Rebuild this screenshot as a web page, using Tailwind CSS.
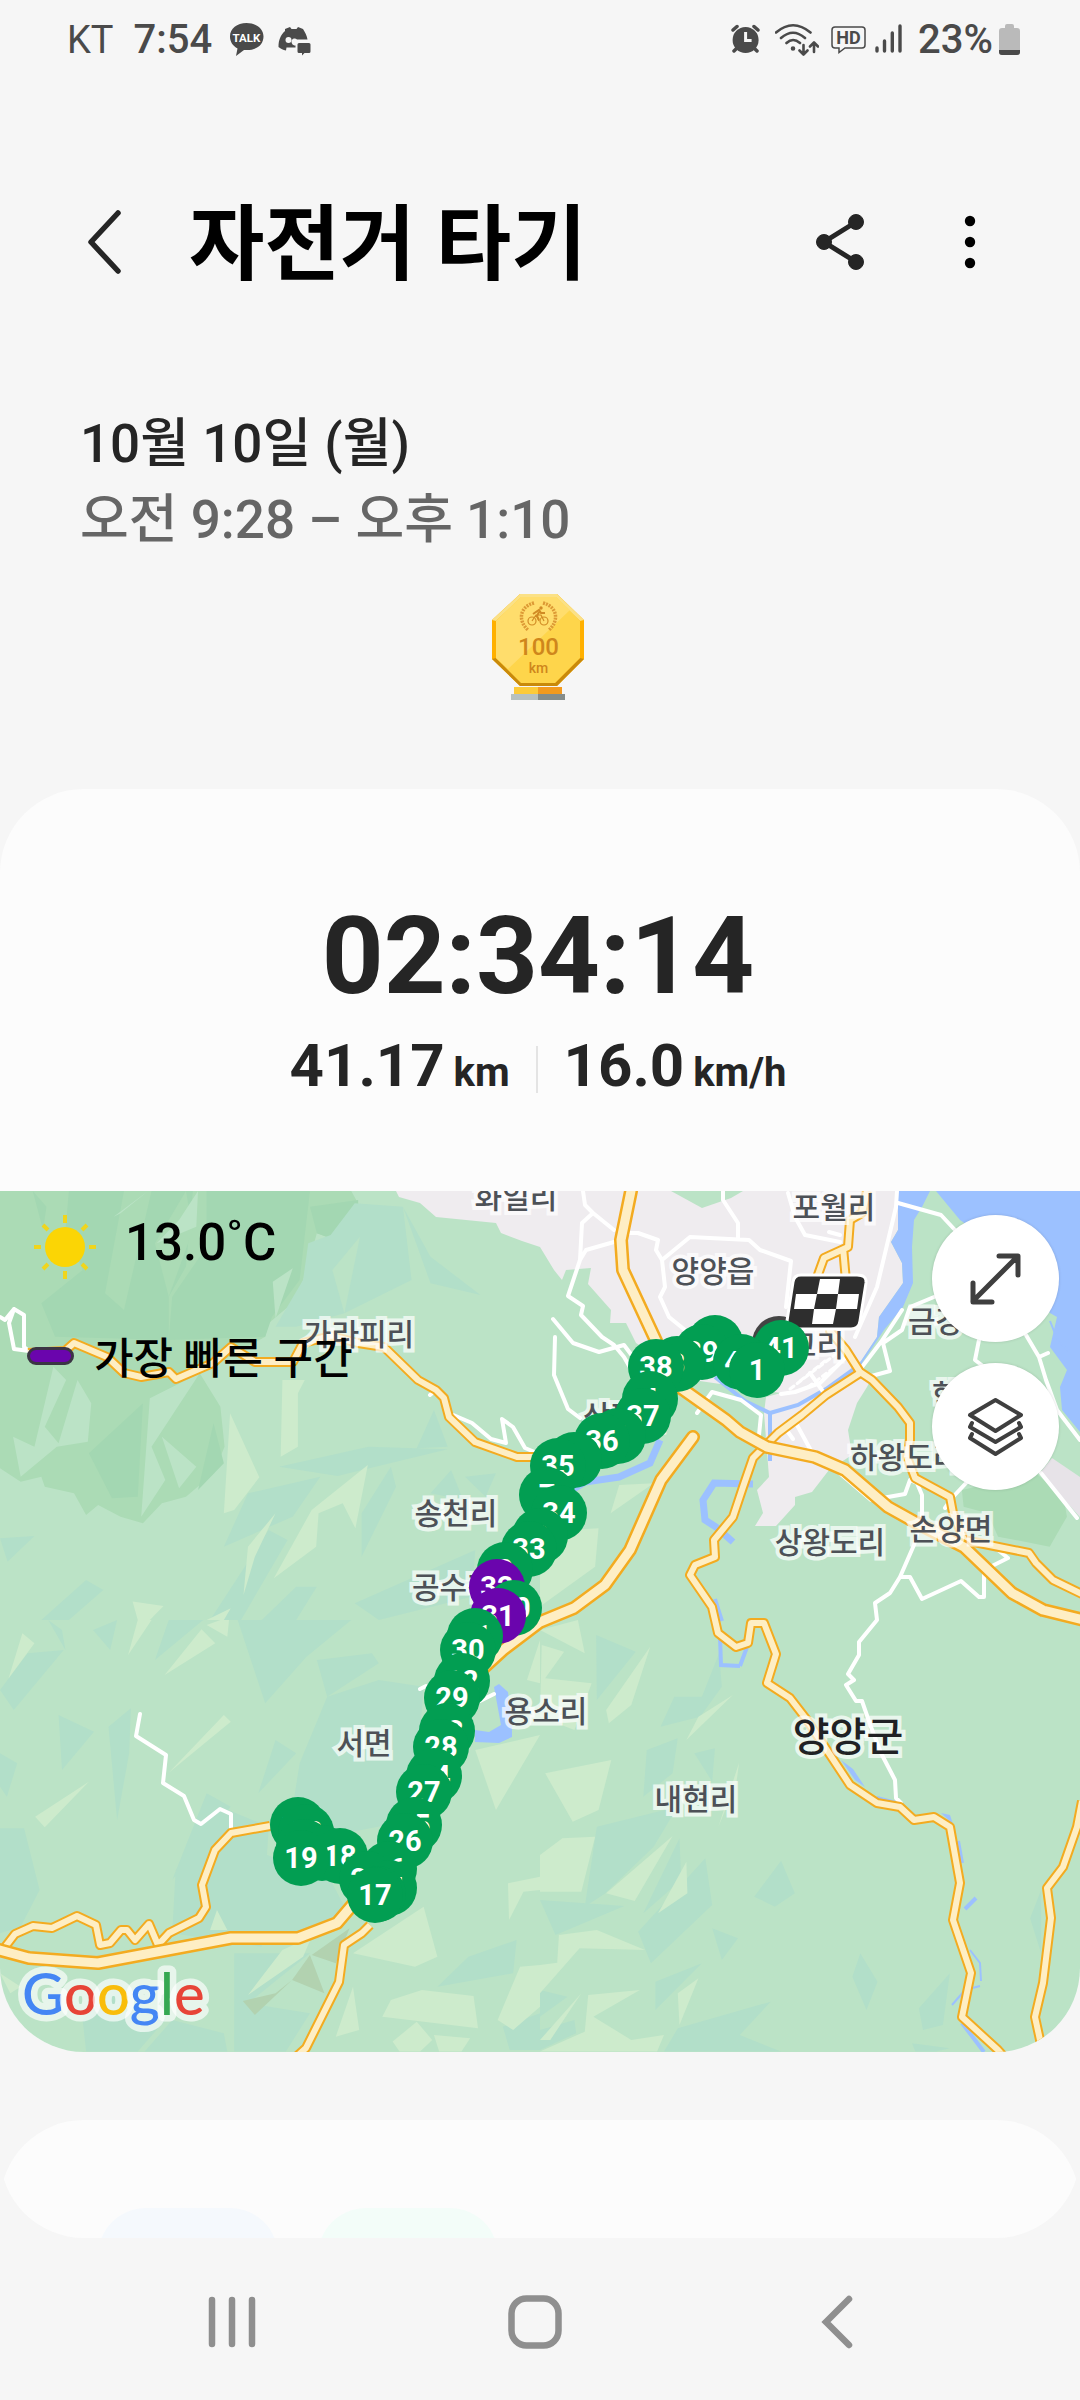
<!DOCTYPE html>
<html lang="ko">
<head>
<meta charset="utf-8">
<meta name="viewport" content="width=device-width, initial-scale=1">
<title>자전거 타기</title>
<script src="https://cdn.jsdelivr.net/npm/@tailwindcss/browser@4"></script>
</head>
<body class="flex min-h-screen flex-col bg-[#f6f6f6] font-['Roboto','Noto_Sans_CJK_KR',sans-serif] text-[#252525]">

<!-- Status bar -->
<div class="flex h-20 items-center pl-[67px] pr-[59px] text-[40px] leading-none text-[#4a4a4a]">
  <span class="text-[38px]">KT</span>
  <span class="ml-5 font-medium">7:54</span>
  <svg class="ml-[17px] h-9 w-[35px]" viewBox="0 0 35 36" aria-label="TALK">
    <path d="M17.5 1C8 1 1 6.500 1 14.500c0 5.500 3 9.500 7.500 12L7 34l8-6c12 1 19.500-5 19.500-13.500C34.500 6.500 27 1 17.500 1z" fill="#4a4a4a"/>
    <text x="17.500" y="19.500" font-family="Roboto" font-weight="700" font-size="11.500" text-anchor="middle" fill="#fff">TALK</text>
  </svg>
  <svg class="ml-3.5 h-8 w-[34px]" viewBox="279 25 34 32" aria-hidden="true">
    <path d="M286 30l5-2 1.500 2h5l1.500-2 5 2c2 3 4 7 4.500 10.500H298c-2-2.500-7-.5-5 4 .5 1.500 2 2 3.500 2v2h-9l-.5 3c-3-.5-5-1.500-7.500-3.500 0-7 2-12 6.500-16z" fill="#4a4a4a"/>
    <circle cx="289.500" cy="41" r="3" fill="#f6f6f6"/>
    <path d="M300 44h10a1.500 1.500 0 0 1 1.500 1.500v7a1.500 1.500 0 0 1-1.500 1.500h-4.500l-2.500 2.500V54h-3a1.500 1.500 0 0 1-1.500-1.500v-7A1.500 1.500 0 0 1 300 44z" fill="#4a4a4a"/>
  </svg>
  <svg class="ml-auto h-8 w-[30px]" viewBox="731 25 30 32" aria-hidden="true">
    <circle cx="745.600" cy="41" r="13" fill="#4a4a4a"/>
    <path d="M733 31l4-3.500M758 31l-4-3.500M737 49l-3 3M754 49l3 3" stroke="#4a4a4a" stroke-width="3.500" stroke-linecap="round"/>
    <path d="M745.600 33v8.500h6" stroke="#f6f6f6" stroke-width="3" fill="none"/>
  </svg>
  <svg class="ml-3.5 h-9 w-[44px]" viewBox="775 22 44 36" aria-hidden="true" fill="none" stroke="#4a4a4a" stroke-width="2.600" stroke-linecap="round" stroke-linejoin="round">
    <path d="M776 32.500q17-14.500 34.500 0M781 38q12-10.500 24 0M786.500 43q6.500-6 13.500 0"/>
    <circle cx="793" cy="48.500" r="1" fill="#4a4a4a"/>
    <path d="M803.500 45v9m-4-3.500l4 4 4-4M814 52v-9m-4 3.500l4-4 4 4"/>
  </svg>
  <svg class="ml-3 h-8 w-[35px]" viewBox="831 25 35 32" aria-label="HD">
    <path d="M835 28h27a3 3 0 0 1 3 3v15a3 3 0 0 1-3 3h-17l-6 4.500V49h-4a3 3 0 0 1-3-3V31a3 3 0 0 1 3-3z" fill="none" stroke="#4a4a4a" stroke-width="1.500"/>
    <text x="848.500" y="45" font-family="Roboto" font-weight="700" font-size="18" text-anchor="middle" fill="#4a4a4a">HD</text>
  </svg>
  <svg class="ml-2 h-8 w-7" viewBox="874 25 28 32" aria-hidden="true" stroke="#4a4a4a" stroke-width="3.400" stroke-linecap="round">
    <path d="M877 49v3M884.500 42v10M892.300 34v18M900 27v25"/>
  </svg>
  <span class="ml-4 font-medium">23%</span>
  <svg class="ml-1.5 h-8 w-[22px]" viewBox="0 0 22 32" aria-hidden="true">
    <path d="M6 2a2 2 0 0 1 2-2h5a2 2 0 0 1 2 2v2h3a3 3 0 0 1 3 3v21a3 3 0 0 1-3 3H3a3 3 0 0 1-3-3V7a3 3 0 0 1 3-3h3z" fill="#bababa"/>
    <path d="M0 26h21v2a3 3 0 0 1-3 3H3a3 3 0 0 1-3-3z" fill="#4a4a4a"/>
  </svg>
</div>

<!-- Title bar -->
<header class="mt-[82px] flex h-40 items-center pl-[76px] pr-[80px]">
  <button type="button" aria-label="뒤로" class="flex h-20 w-14 items-center justify-center">
    <svg class="h-[70px] w-10" viewBox="0 0 40 70" fill="none" stroke="#252525" stroke-width="5.500" stroke-linecap="round" stroke-linejoin="round"><path d="M34 6L7 35l27 29"/></svg>
  </button>
  <h1 class="ml-[57px] pt-1.5 text-[82px] leading-[120px] font-bold text-black">자전거 타기</h1>
  <button type="button" aria-label="공유" class="ml-auto flex h-20 w-20 items-center justify-center">
    <svg class="h-[60px] w-[52px]" viewBox="0 0 52 60" fill="#252525" stroke="#252525"><path d="M42 10L10 30l32 20" fill="none" stroke-width="5"/><circle cx="10" cy="30" r="7.500"/><circle cx="42" cy="10" r="7.500"/><circle cx="42" cy="50" r="7.500"/></svg>
  </button>
  <button type="button" aria-label="옵션 더보기" class="ml-[60px] flex h-20 w-[60px] items-center justify-center">
    <svg class="h-[60px] w-4" viewBox="0 0 16 60"><circle cx="8" cy="9" r="5.200"/><circle cx="8" cy="30" r="5.200"/><circle cx="8" cy="51" r="5.200"/></svg>
  </button>
</header>

<main>
  <section class="mt-[84px] px-20 text-[53px] leading-[76px] font-medium">
    <p>10월 10일 (월)</p>
    <p class="text-[#666]">오전 9:28 – 오후 1:10</p>
  </section>

  <div class="mt-9 flex justify-center pr-1">
  <svg class="h-[106px] w-[96px]" viewBox="490 594 96 106" role="img" aria-label="100 km">
    <path d="M520 594h37l27 26v39l-27 27h-37l-28-27v-39z" fill="#ffb000"/>
    <path d="M492 659l28 27h37l27-27-4-1-25 25h-33l-26-25z" fill="#c98a0b"/>
    <path d="M520 594h37l27 26-4 1-25-24h-33l-26 24-4-1z" fill="#fbe186"/>
    <path d="M521 597h35l24 24v37l-25 25h-34l-25-25v-37z" fill="#fed54b"/>
    <path d="M521 597h35l14 13-62 59-12-11v-37z" fill="#ffdd6c"/>
    <g fill="none" stroke="#dd9a35" stroke-width="3.500" stroke-dasharray="2 1"><path d="M534 603c-15 4-16 18-6 27M543 603c15 4 16 18 6 27"/></g>
    <g fill="none" stroke="#d18b24" stroke-width="1.200"><circle cx="532" cy="621" r="4"/><circle cx="544" cy="621" r="4"/><path d="M532 621l4-6 5 0 3 6M536 615l3 6"/><path d="M533 614l6-4 2 3h4M539 612l-2 4 2 4" stroke-width="2"/></g>
    <circle cx="541" cy="608" r="1.700" fill="#d18b24"/>
    <text x="538.500" y="655" text-anchor="middle" font-family="Roboto" font-weight="500" font-size="24" fill="#cf861c">100</text>
    <text x="538.500" y="673" text-anchor="middle" font-family="Roboto" font-weight="500" font-size="14" fill="#cf861c">km</text>
    <path d="M514 687h24v7h-24z" fill="#fccb3a"/><path d="M538 687h24v7h-24z" fill="#f39a1f"/>
    <path d="M511 694h27v6h-27z" fill="#b7c1c0"/><path d="M538 694h27v6h-27z" fill="#868d8b"/>
  </svg>
  </div>

  <section class="mt-[89px] overflow-hidden rounded-[84px] bg-[#fcfcfc]">
    <div class="flex h-[402px] flex-col items-center pt-[105px] pr-1 font-bold">
      <p class="text-[108px] leading-[124px]">02:34:14</p>
      <div class="mt-2.5 flex items-center">
        <p class="text-[60px] leading-[76px]">41.17 <span class="-ml-1.5 text-[40px]">km</span></p>
        <span class="mx-[26px] h-[47px] w-0.5 bg-[#e4e4e4]"></span>
        <p class="text-[60px] leading-[76px]">16.0 <span class="-ml-1.5 text-[40px]">km/h</span></p>
      </div>
    </div>

    <div class="relative h-[861px] overflow-hidden bg-[#bbe3c6]">
      <svg class="block h-full w-full" viewBox="0 0 1080 861" preserveAspectRatio="xMidYMid slice" role="img" aria-label="경로 지도">
        <!-- terrain, north-west -->
        <g transform="matrix(.3444 0 0 .3333 0 -11)">
          <path fill="#abdbb5" d="M0 33H1020L1050 90 1040 150 1000 190 920 160 890 270 860 360 780 430 770 470 580 580 640 680 652 800 620 880 540 950 470 970 415 1030 350 1010 285 975 250 1005 215 940 130 920 120 890 60 905 0 865z"/>
          <path fill="#a3d7b2" d="M200 33H560L540 260 490 350V480L160 470 120 370 240 270 190 150zM600 33H900L870 300 790 410 770 470 490 480 500 350 600 200zM900 80L1040 60 1040 150 1000 190 920 160zM415 670L400 950 325 955 258 820zM620 730L650 850 575 930zM95 33L135 80 125 150z"/>
          <path fill="#abdbb5" d="M360 33L440 33 360 390 305 340zM450 190L540 33 560 150 490 350z"/>
          <path fill="#bbe3c6" d="M575 33L570 140 455 190 520 120zM430 33L350 100 330 110zM850 265L800 415 792 305zM155 560L192 600 130 740 170 790 225 600 265 670 255 785 165 800 60 890 38 770 100 800zM435 655L580 580 440 800 480 900 410 1010zM470 770L570 860 520 925z"/>
          <path fill="#b2dfc9" d="M880 300L895 190 960 165 1030 70 1170 80 1195 300 1000 400 860 440H800zM1170 80L1250 230 1395 345 1250 310zM810 860L1070 800 1300 808 980 888zM1260 690L1300 800 1210 805zM720 940L930 890 850 1010 650 1100zM0 1075L100 1068 22 1145zM1135 860L1150 920 1050 1130V1000zM1310 870L1345 960 1250 940zM1350 890L1440 880 1410 950zM250 1200L300 1230 200 1320H120zM780 1050L835 1080 700 1320H610zM860 1220H920L860 1320H760zM1380 1110L1370 1250 1100 1320 1030 1270z"/>
          <path fill="#bbe3c6" d="M1045 170L1000 400 965 270z"/>
          <path fill="#cdebcc" d="M668 700L753 892 680 990 650 1000zM820 600H885L865 640V800L815 830zM1068 855L1032 1045 995 970 925 1000 918 1100 795 1195 905 990zM800 1000L740 1130 707 1245 720 1100zM385 1265L475 1278 435 1320H400zM670 1285L650 1320H600z"/>
        </g>
        <!-- terrain, north-east -->
        <g transform="matrix(.3444 0 0 .3333 540 -11)">
          <path fill="#abdbb5" d="M1225 930L1440 880 1520 950 1530 1010 1480 1100 1330 1070 1300 1000 1230 980z"/>
          <path fill="#cdebcc" d="M230 915L330 910 205 1000zM80 1050L170 1045 160 1160 0 1280V1120z"/>
        </g>
        <!-- terrain, south-west -->
        <g transform="matrix(.3444 0 0 .3333 0 429)">
          <path fill="#b2dfc9" d="M170 285L273 335 180 450zM80 100L185 90 40 270 0 210zM270 30L340 0 320 90zM180 30L140 0 190 90zM380 265L375 400 340 600 315 320zM0 400L50 430 20 530 0 500zM0 625H70L115 810 60 920 0 940zM490 0H590L450 120zM690 0H1020L890 110 770 250zM920 120L1080 100 1100 130 950 230zM950 230L1100 180 1230 200 1200 600 1000 640 850 560 870 430zM510 750L640 560 780 620 760 980 500 940zM715 680L960 780 1010 880 870 940 710 930zM750 520L860 400 800 360zM600 520L670 560 500 780zM680 1000H900L720 1150 900 1180 830 1295H680zM1270 1100L1360 1010 1500 960 1490 1060zM1460 1220L1568 1180V1290H1480zM240 1200L330 1100 480 1200 400 1295H250zM500 1200L650 1240 660 1295H420z"/>
          <path fill="#cdebcc" d="M65 40L100 70 25 175zM585 28L625 70 478 165zM600 15L640 0H665L660 50zM440 0L372 105 400 0zM650 285L670 305 490 458zM258 485L130 622 102 590zM905 950L880 1010 720 1125 820 990zM1025 1000L1230 860 1270 1010 1205 1040zM1135 1140L1225 1110 1375 1128 1388 1225 1110 1190zM1025 1100L1043 1230 975 1250zM1210 1205L1255 1260 1220 1295H1160L1140 1265zM1260 1245L1365 1255 1340 1295H1275zM1475 790L1568 770V810L1520 815 1478 900zM1510 1040L1568 1035V1160L1490 1230 1445 1200zM1380 390L1568 345 1440 570zM1530 180L1568 60V190zM0 1060L60 1100 30 1120zM630 870L660 930 610 930z"/>
          <path fill="#b2d2b0" d="M905 1005L1015 925 975 1030zM848 1080L900 1005 942 1120zM848 1080L740 1185 705 1143 800 1120z"/>
        </g>
        <!-- terrain, south-east -->
        <g transform="matrix(.3444 0 0 .3333 540 429)">
          <path fill="#b2dfc9" d="M163 45L278 95 165 240zM520 100L528 200 465 290 350 320 390 230H470zM310 390L400 355 385 460 300 530zM448 400L508 385 500 485zM165 620L400 560 330 680 190 820 130 860zM405 655L410 780 300 880zM480 715L500 855 322 1030 285 935zM700 722L740 820 682 860 622 830zM500 925L575 955 528 1020zM930 1000L980 1085 948 1170 907 1070zM1190 1060L1170 1215 1112 1230 1100 1165zM335 1085L470 1030 335 1170zM360 1295L400 1225 670 1145 580 1245 700 1295zM1455 810V1000L1423 895zM0 840L245 858 45 945zM0 1110L80 1130 0 1190zM100 1200L105 1240 0 1290V1230zM1080 1270L1190 1285 1150 1295H1090z"/>
          <path fill="#cdebcc" d="M0 30L110 0 130 100zM5 75L70 95 15 175 150 190 100 330 0 290zM320 80L265 255 200 310 192 270zM560 225L425 360 460 290zM15 460L207 420 170 570 95 605zM0 705L65 655 160 650 120 815H0zM385 648L275 843 192 820zM425 725L428 820 343 880zM55 945L165 930 305 990 115 985 0 1120V1035L50 1028zM140 1125L290 1110 155 1190 265 1260 360 1245 340 1295H0L130 1235zM400 1120L460 1075 405 1215zM578 428L570 490 518 620zM120 1120L30 1260 0 1260z"/>
        </g>

        <!-- towns -->
        <path fill="#efecef" d="M396 0L399 6 420 12 436 26 496 32 501 42 522 50 540 56 554 79 562 89 566 79 591 77 588 93 611 119 610 132H626L636 152 700 190 781 202 766 206 764 222 769 286 757 299 763 322 755 335H776L795 314V306L812 301 829 279 852 264 848 239 857 212 867 196 872 186 857 176 877 146 879 126 903 92 902 72 891 51 898 39V0z"/>
        <path fill="#bbe3c6" d="M671 0L702 17 731 7 743 0z"/>
        <path fill="#e7e3e8" d="M1052 267L1080 286V326L1040 282z"/>

        <!-- water -->
        <g fill="#9cc1ff">
          <path d="M936 0L960 29 990 50 1035 100 1050 122 1057 126 1050 156 1067 179 1060 196 1062 219 1080 241V0z"/>
          <path d="M898 0H930L922 16 914 29 912 56 913 92 903 116 884 139 862 172 857 176 877 146 879 126 903 92 902 72 891 51 898 39z"/>
          <path d="M494 496L499 493 508 501 512 536V546L499 552 475 551V539L489 541 501 534z"/>
          <path d="M841 569L853 578 865 596 855 589zM941 622L950 624 953 633z"/>
        </g>
        <g fill="none" stroke="#9cc1ff" stroke-width="4">
          <path d="M862 172L826 198 798 214 770 222 745 210 715 186M770 222V270M720 446L721 474 740 475M740 475L747 456" />
          <path d="M660 249L650 272 619 286 585 291 570 300M753 293L714 292 703 309 705 329 716 336 733 351" stroke-width="7"/>
          <path d="M976 707L965 718M962 832L984 861M958 650L962 672M715 408L722 430"/>
          <path d="M970 759L980 772 981 790M980 795L965 799 952 814M877 606L900 612" stroke-width="2"/>
          <path d="M1050 130L1058 150 1069 160" stroke-width="2"/>
        </g>

        <!-- local streets -->
        <g fill="none" stroke="#fff" stroke-width="4" stroke-linejoin="round" stroke-linecap="round">
          <path d="M0 126L5 129 14 118 24 124V156L29 160 14 158 9 132 14 118M451 223L472 232 491 248 506 252 502 228 513 236 525 257 537 262M430 204L436 199"/>
          <path d="M140 523L136 545 166 564 163 592 184 605 194 629 201 633 220 618 231 623V639"/>
          <path d="M583 0L585 14 593 22 614 39M593 22L582 32 580 69 568 105 583 115 581 124 602 146 614 154 624 166 632 180M614 51L586 59 580 69M553 128L573 152 599 161 624 154 636 170M555 146L554 184 568 218 580 227"/>
          <path d="M629 42H638L658 49 656 59 662 69 665 96 660 106 669 126 685 139M662 69L690 46 749 49 760 59 791 70 786 116M723 0V9L738 32V47M788 2L795 26 805 44 840 51M829 41L840 44"/>
          <path d="M897 0L896 16 877 96 855 146M898 12L941 24 955 39M902 119L881 151 862 176M934 106L910 116 902 139 883 152 890 180 864 187M979 149L975 169 988 179M1026 144L1039 166 1048 162M1039 166L1046 189 1057 219 1080 249"/>
          <path d="M810 182L824 202M797 234L815 267M788 241L793 248M697 222L712 201 741 209 761 224 759 244M781 203L795 201 820 192 844 168"/>
          <path d="M800 190L825 170M808 196L835 176M790 198L840 160" stroke-width="3" stroke-dasharray="5 4"/>
          <path d="M836 279L871 309 905 303 910 289 917 292 922 304V326L914 354 900 386 890 402 875 412 877 429 859 451V464L848 483 854 489 846 494 856 510H862L871 536 881 562 895 589 896 607 901 612M900 386H910L922 408 961 390 979 406H984V379L1008 367 998 359M967 291L952 307 945 317M1041 282L1077 327M420 498L426 495M480 510L494 503"/>
        </g>

        <!-- arterial roads: casing, then surface -->
        <g fill="none" stroke-linejoin="round">
          <g stroke="#f3ab20" stroke-width="10">
            <path d="M28 162L65 160 74 152 107 166 124 182 141 186 169 181 176 188 213 172 231 156 255 171H293L303 152 331 145 358 152 384 156 418 189 436 199 444 207 449 226 475 251 517 266H534"/>
            <path d="M270 635L231 642 215 659 202 694 206 716 199 727 169 742 158 754 149 733 135 749 127 739H121L110 752 100 754 96 734 77 725 52 737 33 735 15 743 5 756"/>
            <path d="M370 734L362 742 344 754 339 791 306 857 296 866"/>
            <path d="M867 0L862 22 850 29 848 56 824 67 815 92M843 56L846 90 830 140 846 159 860 181 872 189 898 216 910 232V249L907 266 915 287 950 306 953 322 964 349 1029 362 1036 372 1053 389 1084 404"/>
            <path d="M860 182L826 204 802 224 778 242 753 267 743 296 733 326 714 349 715 366 695 374 690 384 712 416 718 442 736 456 748 452 751 432H764L776 463 767 492 790 507 807 529 850 594 877 612 900 616 914 629 934 626 950 636 960 692 953 729 971 782 962 826 998 859 1006 868"/>
            <path d="M1082 610L1077 636 1063 676 1047 697 1051 727 1043 792 1035 826 1040 849 1046 866"/>
          </g>
          <g stroke="#feeec4" stroke-width="6">
            <path d="M28 162L65 160 74 152 107 166 124 182 141 186 169 181 176 188 213 172 231 156 255 171H293L303 152 331 145 358 152 384 156 418 189 436 199 444 207 449 226 475 251 517 266H534"/>
            <path d="M270 635L231 642 215 659 202 694 206 716 199 727 169 742 158 754 149 733 135 749 127 739H121L110 752 100 754 96 734 77 725 52 737 33 735 15 743 5 756"/>
            <path d="M370 734L362 742 344 754 339 791 306 857 296 866"/>
            <path d="M867 0L862 22 850 29 848 56 824 67 815 92M843 56L846 90 830 140 846 159 860 181 872 189 898 216 910 232V249L907 266 915 287 950 306 953 322 964 349 1029 362 1036 372 1053 389 1084 404"/>
            <path d="M860 182L826 204 802 224 778 242 753 267 743 296 733 326 714 349 715 366 695 374 690 384 712 416 718 442 736 456 748 452 751 432H764L776 463 767 492 790 507 807 529 850 594 877 612 900 616 914 629 934 626 950 636 960 692 953 729 971 782 962 826 998 859 1006 868"/>
            <path d="M1082 610L1077 636 1063 676 1047 697 1051 727 1043 792 1035 826 1040 849 1046 866"/>
          </g>
          <g stroke="#f3ab20" stroke-width="14" stroke-linecap="round">
            <path d="M631 -9V0L621 49 623 79 657 152 681 197 726 229 740 241 767 256 815 266 845 279 888 316 915 331 964 356 1012 402 1043 419 1088 430"/>
            <path d="M693 246L661 289 630 359 605 394 574 417 540 431 503 459 480 480"/>
            <path d="M360 705L337 732 298 747H231L98 772 29 767 -8 757"/>
          </g>
          <g stroke="#feeec4" stroke-width="9" stroke-linecap="round">
            <path d="M631 -9V0L621 49 623 79 657 152 681 197 726 229 740 241 767 256 815 266 845 279 888 316 915 331 964 356 1012 402 1043 419 1088 430"/>
            <path d="M693 246L661 289 630 359 605 394 574 417 540 431 503 459 480 480"/>
            <path d="M360 705L337 732 298 747H231L98 772 29 767 -8 757"/>
          </g>
        </g>

        <!-- place names -->
        <g font-family="Noto Sans CJK KR, sans-serif" font-weight="500" font-size="30" fill="#4d5157" stroke="#fff" stroke-opacity=".7" stroke-width="8" paint-order="stroke">
          <g text-anchor="middle">
            <text x="516" y="17">화일리</text>
            <text x="834" y="27">포월리</text>
            <text x="713" y="91">양양읍</text>
            <text x="359" y="154">가라피리</text>
            <text x="456" y="333">송천리</text>
            <text x="830" y="362">상왕도리</text>
            <text x="951" y="349">손양면</text>
            <text x="546" y="531">용소리</text>
            <text x="364" y="563">서면</text>
            <text x="696" y="619">내현리</text>
          </g>
          <text x="412" y="407">공수전리</text>
          <text x="583" y="236">상평리</text>
          <text x="908" y="141">금강리</text>
          <text x="932" y="215">학포리</text>
          <text x="850" y="277">하왕도리</text>
          <text x="844" y="165" text-anchor="end">구교리</text>
          <text x="848" y="560" font-size="40" fill="#202124" text-anchor="middle">양양군</text>
        </g>

        <!-- finish flag over the start pin -->
        <circle cx="779" cy="152" r="27" fill="#444"/>
        <path d="M801 84H857Q867 84 866 92L860 130Q859 138 851 138H794Q786 138 787 130L793 91Q794 84 801 84z" fill="#2e2e2e" stroke="#fff" stroke-width="3"/>
        <path d="M820 88H840L838 103H817zM796 103H817L814 118H794zM838 103H859L857 118H836zM814 118H836L833 133H812z" fill="#fff"/>

        <!-- kilometre markers, north to south -->
        <g font-family="Roboto, sans-serif" font-weight="700" font-size="29" text-anchor="middle" fill="#fff">
          <circle cx="715" cy="152" r="28" fill="#029e52"/><text x="715" y="162">2</text>
          <circle cx="781" cy="157" r="28" fill="#029e52"/><text x="781" y="167">41</text>
          <circle cx="702" cy="161" r="28" fill="#029e52"/><text x="702" y="171">39</text>
          <circle cx="741" cy="171" r="28" fill="#029e52"/><text x="741" y="181">40</text>
          <circle cx="677" cy="173" r="28" fill="#029e52"/><text x="677" y="183">3</text>
          <circle cx="656" cy="176" r="28" fill="#029e52"/><text x="656" y="186">38</text>
          <circle cx="757" cy="179" r="28" fill="#029e52"/><text x="757" y="189">1</text>
          <circle cx="650" cy="208" r="28" fill="#029e52"/><text x="650" y="218">4</text>
          <circle cx="643" cy="225" r="28" fill="#029e52"/><text x="643" y="235">37</text>
          <circle cx="618" cy="245" r="28" fill="#029e52"/><text x="618" y="255">5</text>
          <circle cx="602" cy="250" r="28" fill="#029e52"/><text x="602" y="260">36</text>
          <circle cx="574" cy="269" r="28" fill="#029e52"/><text x="574" y="279">6</text>
          <circle cx="558" cy="275" r="28" fill="#029e52"/><text x="558" y="285">35</text>
          <circle cx="547" cy="304" r="28" fill="#029e52"/><text x="547" y="314">7</text>
          <circle cx="559" cy="322" r="28" fill="#029e52"/><text x="559" y="332">34</text>
          <circle cx="540" cy="345" r="28" fill="#029e52"/><text x="540" y="355">8</text>
          <circle cx="529" cy="358" r="28" fill="#029e52"/><text x="529" y="368">33</text>
          <circle cx="505" cy="379" r="28" fill="#029e52"/><text x="505" y="389">9</text>
          <circle cx="497" cy="396" r="28" fill="#6a05ad"/><text x="497" y="406">32</text>
          <circle cx="514" cy="417" r="28" fill="#029e52"/><text x="514" y="427">10</text>
          <circle cx="498" cy="425" r="28" fill="#6a05ad"/><text x="498" y="435">31</text>
          <circle cx="475" cy="445" r="28" fill="#029e52"/><text x="475" y="455">11</text>
          <circle cx="468" cy="459" r="28" fill="#029e52"/><text x="468" y="469">30</text>
          <circle cx="462" cy="490" r="28" fill="#029e52"/><text x="462" y="500">12</text>
          <circle cx="452" cy="507" r="28" fill="#029e52"/><text x="452" y="517">29</text>
          <circle cx="447" cy="540" r="28" fill="#029e52"/><text x="447" y="550">13</text>
          <circle cx="441" cy="556" r="28" fill="#029e52"/><text x="441" y="566">28</text>
          <circle cx="434" cy="585" r="28" fill="#029e52"/><text x="434" y="595">14</text>
          <circle cx="424" cy="601" r="28" fill="#029e52"/><text x="424" y="611">27</text>
          <circle cx="298" cy="634" r="28" fill="#029e52"/><text x="298" y="644">21</text>
          <circle cx="414" cy="634" r="28" fill="#029e52"/><text x="414" y="644">15</text>
          <circle cx="306" cy="641" r="28" fill="#029e52"/><text x="306" y="651">22</text>
          <circle cx="405" cy="650" r="28" fill="#029e52"/><text x="405" y="660">26</text>
          <circle cx="304" cy="656" r="28" fill="#029e52"/><text x="304" y="666">20</text>
          <circle cx="322" cy="662" r="28" fill="#029e52"/><text x="322" y="672">23</text>
          <circle cx="340" cy="665" r="28" fill="#029e52"/><text x="340" y="675">18</text>
          <circle cx="301" cy="667" r="28" fill="#029e52"/><text x="301" y="677">19</text>
          <circle cx="389" cy="678" r="28" fill="#029e52"/><text x="389" y="688">16</text>
          <circle cx="367" cy="688" r="28" fill="#029e52"/><text x="367" y="698">24</text>
          <circle cx="389" cy="697" r="28" fill="#029e52"/><text x="387" y="707">25</text>
          <circle cx="378" cy="703" r="28" fill="#029e52"/>
          <circle cx="375" cy="704" r="28" fill="#029e52"/><text x="375" y="714">17</text>
        </g>
      </svg>

      <!-- weather and legend over the map -->
      <div class="absolute top-[18px] left-[27px]">
        <div class="flex h-[76px] items-center">
          <svg class="h-[76px] w-[76px]" viewBox="27 18 76 76" aria-hidden="true"><circle cx="65" cy="56" r="20" fill="#fbd505"/><path d="M65 32v-8M65 80v8M41 56h-7M89 56h7M48 39l-5-5M82 39l5-5M48 73l-5 5M82 73l5 5" stroke="#f0d51c" stroke-width="4"/></svg>
          <span class="-mt-2 ml-[22px] text-[51px] leading-[60px] font-medium text-black">13.0˚C</span>
        </div>
        <div class="mt-[41px] flex h-[60px] items-center">
          <span class="h-[18px] w-[47px] rounded-full border-[3px] border-[#3b3544] bg-[#6a05ad]"></span>
          <span class="ml-5 pt-1.5 text-[43px] leading-[60px] font-medium text-black">가장 빠른 구간</span>
        </div>
      </div>

      <div class="absolute top-6 right-[21px] flex flex-col gap-[21px]">
        <button type="button" aria-label="지도 확대" class="h-[127px] w-[127px] rounded-full bg-white shadow-[0_0_3px_rgba(0,0,0,0.15)]">
          <svg class="h-full w-full" viewBox="0 0 127 127" fill="none" stroke="#3f3f3f" stroke-width="5" stroke-linecap="round" stroke-linejoin="round"><path d="M41 86L85 42M67 41H86V60M41 68V87H60"/></svg>
        </button>
        <button type="button" aria-label="지도 유형" class="h-[127px] w-[127px] rounded-full bg-white shadow-[0_0_3px_rgba(0,0,0,0.15)]">
          <svg class="h-full w-full" viewBox="0 0 127 127" fill="none" stroke="#3f3f3f" stroke-width="4" stroke-linecap="round" stroke-linejoin="round"><path d="M63.500 37L89 52 63.500 68 38 52zM40 60L38 64 63.500 79 89 64 87 60M40 71L38 75 63.500 91 89 75 87 71"/></svg>
        </button>
      </div>

      <svg class="absolute bottom-1 left-3 h-[84px] w-[214px]" viewBox="0 0 214 84" role="img" aria-label="Google">
        <g font-family="Lato, sans-serif" font-weight="500" font-size="58" stroke="#fff" stroke-opacity=".65" stroke-width="13" stroke-linejoin="round" paint-order="stroke">
          <text x="10" y="51"><tspan fill="#4486f4">G</tspan><tspan fill="#e74437">o</tspan><tspan fill="#f9bd0a">o</tspan><tspan fill="#4486f4">g</tspan><tspan fill="#36a852">l</tspan><tspan fill="#e74437">e</tspan></text>
        </g>
      </svg>
    </div>
  </section>

  <!-- next card, cut off by the bottom of the scroll area -->
  <section class="mt-[68px] h-[118px] overflow-hidden rounded-b-[84px]">
    <div class="flex h-[300px] gap-10 rounded-t-[84px] bg-[#fcfcfc] px-[98px] pt-[88px]">
      <div class="h-[180px] w-[180px] rounded-[48px] bg-[#f5f9fd]"></div>
      <div class="h-[180px] w-[180px] rounded-[48px] bg-[#f3fdf9]"></div>
    </div>
  </section>
</main>

<!-- System navigation -->
<nav class="mt-auto grid h-[162px] grid-cols-3 items-center pt-1.5 pr-[91px] pl-20 text-[#8f8f8f]">
  <button type="button" aria-label="최근 앱" class="flex justify-center"><svg class="h-14 w-14" viewBox="0 0 56 56" stroke="currentColor" stroke-width="6.500" stroke-linecap="round"><path d="M8 6v44M28 6v44M48 6v44"/></svg></button>
  <button type="button" aria-label="홈" class="flex justify-center"><svg class="h-14 w-14" viewBox="0 0 56 56" fill="none" stroke="currentColor" stroke-width="6.500"><rect x="4.500" y="4.500" width="47" height="47" rx="15"/></svg></button>
  <button type="button" aria-label="뒤로 가기" class="flex justify-center"><svg class="h-14 w-14" viewBox="0 0 56 56" fill="none" stroke="currentColor" stroke-width="6.500" stroke-linecap="round" stroke-linejoin="miter"><path d="M39 5L16 28l23 23"/></svg></button>
</nav>
</body>
</html>
